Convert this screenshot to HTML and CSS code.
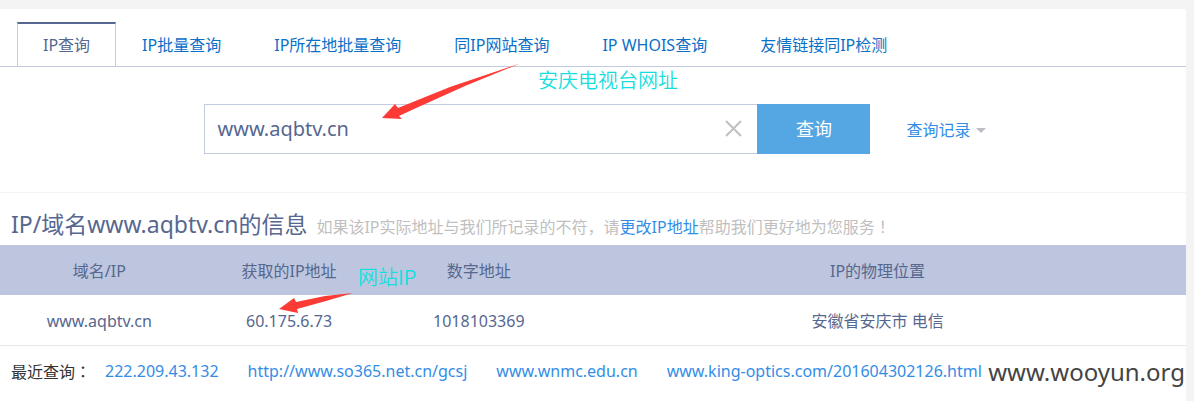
FILE: index.html
```html
<!DOCTYPE html>
<html lang="zh-CN">
<head>
<meta charset="utf-8">
<meta name="viewport" content="width=device-width, initial-scale=1">
<title>IP查询</title>
<link rel="stylesheet" href="styles.css">
</head>
<body>
<main class="page">
  <nav class="tabs">
    <a class="tab tab-active" href="#">IP查询</a>
    <a class="tab" href="#">IP批量查询</a>
    <a class="tab" href="#">IP所在地批量查询</a>
    <a class="tab" href="#">同IP网站查询</a>
    <a class="tab" href="#">IP WHOIS查询</a>
    <a class="tab" href="#">友情链接同IP检测</a>
  </nav>

  <form class="search">
    <div class="search-field">
      <input class="search-input" type="text" value="www.aqbtv.cn" aria-label="域名或IP">
      <button class="search-clear" type="button" aria-label="清除">
        <svg width="18" height="18" viewBox="0 0 18 18" fill="none" stroke="#c2bfc0" stroke-width="2"><path d="M1 1l15 15M16 1l-15 15"/></svg>
      </button>
    </div>
    <button class="search-submit" type="submit">查询</button>
    <a class="history" href="#">查询记录<span class="caret"></span></a>
  </form>

  <section class="result">
    <header class="result-head">
      <h1 class="result-title">IP/域名www.aqbtv.cn的信息</h1>
      <p class="result-tip">如果该IP实际地址与我们所记录的不符，请<a class="link" href="#">更改IP地址</a>帮助我们更好地为您服务<span class="mark" lang="zh-TW">！</span></p>
    </header>
    <table class="result-table">
      <colgroup><col class="col-domain"><col class="col-ip"><col class="col-number"><col></colgroup>
      <thead>
        <tr><th>域名/IP</th><th>获取的IP地址</th><th>数字地址</th><th>IP的物理位置</th></tr>
      </thead>
      <tbody>
        <tr><td>www.aqbtv.cn</td><td>60.175.6.73</td><td>1018103369</td><td>安徽省安庆市 电信</td></tr>
      </tbody>
    </table>
    <div class="recent">
      <span class="recent-label">最近查询<span class="mark" lang="zh-TW">：</span></span>
      <div class="recent-links">
        <a class="link" href="#">222.209.43.132</a>
        <a class="link" href="#">http://www.so365.net.cn/gcsj</a>
        <a class="link" href="#">www.wnmc.edu.cn</a>
        <a class="link" href="#">www.king-optics.com/201604302126.html</a>
      </div>
    </div>
  </section>

  <svg class="arrows" width="540" height="320" viewBox="0 0 540 320" fill="#fc3b36" aria-hidden="true">
    <path d="M520 63.500L450 87 398 108 395 104 382 118 402 119 399 116 414 109 465 86z"/>
    <path d="M353 293L325 296 296 302 294 298 279 309 298 313 297 309 326 301z"/>
  </svg>
  <span class="note note-site">安庆电视台网址</span>
  <span class="note note-ip">网站IP</span>
  <span class="watermark">www.wooyun.org</span>
</main>
</body>
</html>
```
FILE: styles.css
```css
* {
  box-sizing: border-box;
}

body {
  margin: 0;
  padding: 9px 8px 0 0;
  background: #f4f4f4;
  color: #566790;
  font: 16px/24px "Noto Sans", "Noto Sans CJK SC", sans-serif;
}

a {
  text-decoration: none;
}

.page {
  min-height: calc(100vh - 9px);
  background: #fff;
}

.tabs {
  display: flex;
  padding: 13px 17px 0;
  border-bottom: 1px solid #c4cbde;
}

.tab {
  padding: 11px 27px 9px 26px;
  color: #0a70c8;
  white-space: nowrap;
}

.tab-active {
  padding: 9px 25px;
  border: 1px solid #c4cbde;
  border-top: 2px solid #566790;
  border-bottom: 0;
  color: #566790;
}

.search {
  display: flex;
  align-items: center;
  justify-content: center;
  padding: 37px 0 38px 4px;
  border-bottom: 1px solid #f4f4f4;
}

.search-field {
  display: flex;
  width: 553px;
  height: 50px;
  border: 1px solid #c4cbde;
  border-right: 0;
}

.search-input {
  flex: 1;
  min-width: 0;
  padding: 0 12px;
  border: 0;
  background: none;
  color: #566790;
  font: inherit;
  font-size: 20px;
}

.search-clear {
  display: flex;
  align-items: center;
  padding: 0 14px;
  border: 0;
  background: none;
}

.search-submit {
  width: 113px;
  height: 50px;
  padding: 0;
  border: 0;
  background: #55a7e3;
  color: #fff;
  font: inherit;
  font-size: 18px;
}

.history {
  display: flex;
  align-items: center;
  gap: 5px;
  margin-left: 36px;
  padding-top: 2px;
  color: #338de6;
}

.caret {
  border: 5px solid transparent;
  border-top-color: #bcbec6;
  border-bottom: 0;
}

.result-head {
  display: flex;
  align-items: baseline;
  gap: 9px;
  height: 52px;
  padding: 15px 11px 0;
}

.result-title {
  margin: 0;
  font-size: 23px;
  font-weight: 400;
  line-height: 32px;
  white-space: nowrap;
}

.result-tip {
  margin: 0;
  color: #bfbfbf;
  white-space: nowrap;
}

.link {
  color: #338de6;
}

.mark {
  font-family: "Noto Sans CJK TC", sans-serif;
}

.result-table {
  width: 100%;
  border-collapse: collapse;
  table-layout: fixed;
  text-align: center;
}

.result-table th,
.result-table td {
  height: 50px;
  padding: 2px 3px 0 0;
  font-weight: 400;
}

.result-table th {
  background: #bdc6de;
}

.result-table td {
  border-bottom: 1px solid #e8e8e8;
}

.result-table th:last-child,
.result-table td:last-child {
  padding-right: 12px;
}

.col-domain,
.col-number {
  width: 17%;
}

.col-ip {
  width: 15%;
}

.recent {
  display: flex;
  gap: 14px;
  padding: 13px 11px;
  white-space: nowrap;
}

.recent-label {
  color: #333;
}

.recent-links {
  display: flex;
  gap: 29px;
}

.arrows {
  position: absolute;
  top: 0;
  left: 0;
  pointer-events: none;
}

.note {
  position: absolute;
  color: #16dede;
  font: 350 20px/24px "Noto Sans CJK SC DemiLight", "Noto Sans CJK SC", sans-serif;
}

.note-site {
  top: 68px;
  left: 538px;
}

.note-ip {
  top: 265px;
  left: 358px;
}

.watermark {
  position: absolute;
  top: 354px;
  right: 9px;
  color: #444;
  font-size: 24px;
  line-height: 36px;
}
```
